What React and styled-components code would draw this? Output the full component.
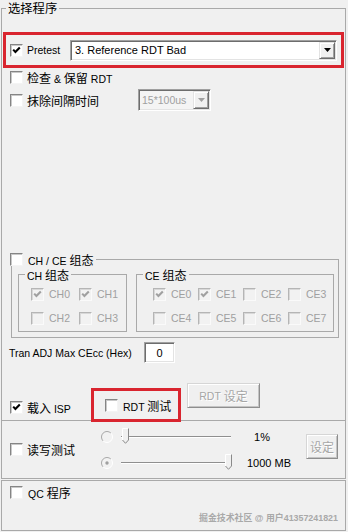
import React from "react";
import styled, { createGlobalStyle } from "styled-components";

const LINE = "#a9a9a9";
const RED = "#d9252f";
const GRAY = "#a0a0a0";

const GlobalStyle = createGlobalStyle`
  html, body { margin: 0; padding: 0; background: #f0f0f0; }
  body {
    font-family: "Liberation Sans", "Noto Sans CJK SC", sans-serif;
    font-size: 10.5px;
    color: #000;
  }
`;

const Page = styled.div`
  width: 348px;
  height: 532px;
  box-sizing: border-box;
  padding-left: 1px;
  overflow: hidden;
`;

const Zh = styled.span`
  font-family: "Noto Sans CJK SC", sans-serif;
  font-size: 12px;
`;

/* ---------- group boxes ---------- */
const MainGroup = styled.fieldset`
  margin: 0;
  padding: 0;
  min-width: 0;
  width: 345px;
  box-sizing: border-box;
  border: 1px solid ${LINE};
`;

const MainLegend = styled.legend`
  margin-left: 4px;
  padding: 0 2px;
  height: 17px;
  display: flex;
  align-items: center;
  font-family: "Noto Sans CJK SC", sans-serif;
  font-size: 12.3px;
  line-height: 17px;
`;

const Body = styled.div`
  display: flex;
  flex-direction: column;
  align-items: flex-start;
`;

const CheckGroup = styled.fieldset`
  margin: 0 0 0 9px;
  padding: 0;
  min-width: 0;
  width: 328px;
  box-sizing: border-box;
  border: 1px solid ${LINE};
`;

const CheckLegend = styled.legend`
  margin-left: -2px;
  padding: 0 3px 0 0;
  height: 14px;
  display: flex;
  align-items: center;
`;

const SubRow = styled.div`
  display: flex;
  gap: 9px;
  padding: 1px 4px 5px 6px;
`;

const SubGroup = styled.fieldset`
  margin: 0;
  padding: 0;
  min-width: 0;
  width: ${(p) => p.$w}px;
  box-sizing: border-box;
  border: 1px solid ${LINE};
`;

const SubLegend = styled.legend`
  margin-left: 6px;
  padding: 0 2px;
  height: 14px;
  display: flex;
  align-items: center;
  white-space: nowrap;
`;

const Grid = styled.div`
  display: grid;
  grid-template-columns: repeat(${(p) => p.$cols}, ${(p) => p.$cw}px);
  grid-auto-rows: 24px;
  align-items: center;
  padding: 1px 0 1px ${(p) => p.$pl}px;
`;

/* ---------- check box ---------- */
const Box = styled.span`
  flex: none;
  width: 13px;
  height: 13px;
  box-sizing: border-box;
  border: 1px solid;
  border-color: ${(p) =>
    p.$disabled ? "#b5b5b5 #fafafa #fafafa #b5b5b5" : "#858585 #f4f4f4 #f4f4f4 #858585"};
  box-shadow: inset 1px 1px ${(p) => (p.$disabled ? "#d8d8d8" : "#c9c9c9")};
  background: ${(p) => (p.$disabled ? "#f2f2f2" : "#fff")};
  display: flex;
  align-items: center;
  justify-content: center;
`;

const CheckLabel = styled.label`
  display: flex;
  align-items: center;
  gap: ${(p) => p.$gap ?? 4}px;
  width: ${(p) => (p.$w ? `${p.$w}px` : "auto")};
  flex: none;
  color: ${(p) => (p.$disabled ? GRAY : "#000")};
  margin-top: ${(p) => p.$mt || 0}px;
  white-space: nowrap;
`;

const Check = ({ checked, disabled, gap, w, mt, children }) => (
  <CheckLabel $gap={gap} $w={w} $mt={mt} $disabled={disabled}>
    <Box $disabled={disabled}>
      {checked && (
        <svg width="9" height="9" viewBox="0 0 9 9">
          <polyline
            points="1.2,3.6 3.4,6 7.8,1.4"
            fill="none"
            stroke={disabled ? GRAY : "#000"}
            strokeWidth="2.1"
          />
        </svg>
      )}
    </Box>
    <span>{children}</span>
  </CheckLabel>
);

/* ---------- red annotation frames ---------- */
const RedFrame = styled.div`
  flex: none;
  box-sizing: border-box;
  border: 3px solid ${RED};
  width: ${(p) => p.$w}px;
  height: ${(p) => p.$h}px;
  margin: ${(p) => p.$m};
  padding-left: ${(p) => p.$pl}px;
  display: flex;
  align-items: center;
`;

/* ---------- combo / input ---------- */
const Combo = styled.div`
  flex: none;
  box-sizing: border-box;
  width: ${(p) => p.$w}px;
  height: ${(p) => p.$h}px;
  border: 1px solid;
  border-color: #a0a0a0 #fff #fff #a0a0a0;
  box-shadow: inset 1px 1px #6d6d6d, inset -1px -1px #e3e3e3;
  background: ${(p) => (p.$disabled ? "#f4f4f4" : "#fff")};
  color: ${(p) => (p.$disabled ? GRAY : "#000")};
  display: flex;
  align-items: center;
  padding-left: ${(p) => p.$pl}px;
  font-size: ${(p) => (p.$disabled ? "10.5px" : "11px")};
`;

const DropBtn = styled.span`
  margin-left: auto;
  margin-right: 1px;
  width: 16px;
  height: ${(p) => p.$h}px;
  box-sizing: border-box;
  border: 1px solid;
  border-color: #e3e3e3 #6d6d6d #6d6d6d #e3e3e3;
  box-shadow: inset 1px 1px #fff, inset -1px -1px #a0a0a0;
  background: #f0f0f0;
  display: flex;
  align-items: center;
  justify-content: center;
`;

const Arrow = ({ color }) => (
  <svg width="7" height="4" viewBox="0 0 7 4">
    <path d="M0 0H7L3.5 4Z" fill={color} />
  </svg>
);

const TextInput = styled.div`
  flex: none;
  box-sizing: border-box;
  width: 31px;
  height: 21px;
  border: 1px solid;
  border-color: #a0a0a0 #fff #fff #a0a0a0;
  box-shadow: inset 1px 1px #6d6d6d, inset -1px -1px #e3e3e3;
  background: #fff;
  display: flex;
  align-items: center;
  justify-content: center;
  font-size: 11px;
`;

/* ---------- rows ---------- */
const OptionRow = styled.div`
  display: flex;
  align-items: center;
  height: ${(p) => p.$h}px;
  margin-top: ${(p) => p.$mt || 0}px;
  padding-left: 8px;
`;

const Spacer = styled.div`
  height: ${(p) => p.$h}px;
`;

const TranRow = styled.div`
  display: flex;
  align-items: center;
  height: 21px;
  margin-top: 4px;
  padding-left: 7px;
`;

const TranLabel = styled.span`
  width: 135px;
  flex: none;
  white-space: nowrap;
`;

const BottomRow = styled.div`
  display: flex;
  align-items: flex-start;
  height: 37px;
  margin-top: 20px;
  padding-left: 8px;
`;

const WinButton = styled.button`
  flex: none;
  box-sizing: border-box;
  width: ${(p) => p.$w}px;
  height: 25px;
  margin: ${(p) => p.$m || 0};
  align-self: flex-start;
  padding: 0;
  font: inherit;
  background: #f0f0f0;
  color: #a6a6a6;
  text-shadow: 1px 1px #fff;
  border: 1px solid;
  border-color: #d6d6d6 #8e8e8e #8e8e8e #d6d6d6;
  box-shadow: inset 1px 1px #fff, inset -1px -1px #c4c4c4;
  display: flex;
  align-items: center;
  justify-content: center;
`;

/* ---------- read/write panel ---------- */
const Panel = styled.div`
  width: 345px;
  height: 58px;
  box-sizing: border-box;
  border: 1px solid ${LINE};
  border-top: none;
  display: flex;
  align-items: center;
  padding-left: 8px;
`;

const SliderGrid = styled.div`
  display: grid;
  grid-template-columns: 12px 119px 74px;
  grid-auto-rows: 26px;
  align-items: center;
`;

const Slider = styled.div`
  position: relative;
  width: 112px;
  height: 26px;
  margin-left: 7px;
  display: flex;
  align-items: center;
`;

const Channel = styled.div`
  width: 110px;
  height: 2px;
  margin-left: 1px;
  box-sizing: border-box;
  border-top: 1px solid #8f8f8f;
  border-bottom: 1px solid #fff;
  background: #c8c8c8;
`;

const ThumbWrap = styled.span`
  position: absolute;
  top: 4px;
  width: 7px;
  height: 16px;
  display: flex;
`;

const Value = styled.span`
  text-align: center;
  padding-right: ${(p) => p.$shift || 0}px;
  font-size: 11px;
  white-space: nowrap;
`;

const Radio = ({ checked }) => (
  <svg width="12" height="12" viewBox="0 0 12 12">
    <circle cx="6" cy="6" r="5.5" fill="#f2f2f2" />
    <path d="M9.9 2.1 A5.5 5.5 0 0 0 2.1 9.9" fill="none" stroke="#a8a8a8" />
    <path d="M2.1 9.9 A5.5 5.5 0 0 0 9.9 2.1" fill="none" stroke="#ffffff" />
    {checked && <circle cx="6" cy="6" r="1.7" fill="#a0a0a0" />}
  </svg>
);

const SliderControl = ({ value }) => (
  <Slider>
    <Channel />
    <ThumbWrap style={{ left: `${2 + value * 103}px` }}>
      <svg width="7" height="16" viewBox="0 0 7 16">
        <path d="M0.5 0.5H6.5V12L3.5 15.3L0.5 12Z" fill="#f0f0f0" />
        <polyline points="0.5,12 0.5,0.5 6.5,0.5" fill="none" stroke="#fff" />
        <polyline points="6.5,0.5 6.5,12 3.5,15.3 0.5,12" fill="none" stroke="#8a8a8a" />
      </svg>
    </ThumbWrap>
  </Slider>
);

/* ---------- QC panel ---------- */
const QcPanel = styled.div`
  width: 345px;
  height: 51px;
  margin-top: 1px;
  box-sizing: border-box;
  border: 1px solid ${LINE};
  padding: 3px 7px 0 8px;
  display: flex;
  flex-direction: column;
`;

const QcRow = styled.div`
  height: 17px;
  display: flex;
  align-items: center;
`;

const Watermark = styled.div`
  margin-top: 10px;
  height: 14px;
  line-height: 14px;
  text-align: right;
  color: #a9a9a9;
  font-size: 8.9px;
  font-weight: bold;
  white-space: nowrap;
`;

export default function App() {
  return (
    <Page>
      <GlobalStyle />
      <MainGroup>
        <MainLegend>选择程序</MainLegend>
        <Body>
          <RedFrame $w={341} $h={36} $m="15px 0 0 1px" $pl={4}>
            <Check checked w={60}>
              Pretest
            </Check>
            <Combo $w={267} $h={21} $pl={4}>
              3. Reference RDT Bad
              <DropBtn $h={17}>
                <Arrow color="#000" />
              </DropBtn>
            </Combo>
          </RedFrame>

          <OptionRow $h={18}>
            <Check>
              <Zh>检查</Zh> &amp; <Zh>保留</Zh> RDT
            </Check>
          </OptionRow>

          <OptionRow $h={22} $mt={3}>
            <Check w={128}>
              <Zh>抹除间隔时间</Zh>
            </Check>
            <Combo $w={73} $h={22} $pl={3} $disabled>
              15*100us
              <DropBtn $h={18}>
                <Arrow color="#a0a0a0" />
              </DropBtn>
            </Combo>
          </OptionRow>

          <Spacer $h={141} />

          <CheckGroup>
            <CheckLegend>
              <Check gap={5}>
                CH / CE <Zh>组态</Zh>
              </Check>
            </CheckLegend>
            <SubRow>
              <SubGroup $w={109}>
                <SubLegend>
                  <span>
                    CH <Zh>组态</Zh>
                  </span>
                </SubLegend>
                <Grid $cols={2} $cw={48} $pl={12}>
                  <Check checked disabled gap={5}>CH0</Check>
                  <Check checked disabled gap={5}>CH1</Check>
                  <Check disabled gap={5}>CH2</Check>
                  <Check disabled gap={5}>CH3</Check>
                </Grid>
              </SubGroup>
              <SubGroup $w={198}>
                <SubLegend>
                  <span>
                    CE <Zh>组态</Zh>
                  </span>
                </SubLegend>
                <Grid $cols={4} $cw={45} $pl={16}>
                  <Check checked disabled gap={5}>CE0</Check>
                  <Check checked disabled gap={5}>CE1</Check>
                  <Check disabled gap={5}>CE2</Check>
                  <Check disabled gap={5}>CE3</Check>
                  <Check disabled gap={5}>CE4</Check>
                  <Check disabled gap={5}>CE5</Check>
                  <Check disabled gap={5}>CE6</Check>
                  <Check disabled gap={5}>CE7</Check>
                </Grid>
              </SubGroup>
            </SubRow>
          </CheckGroup>

          <TranRow>
            <TranLabel>Tran ADJ Max CEcc (Hex)</TranLabel>
            <TextInput>0</TextInput>
          </TranRow>

          <BottomRow>
            <Check checked w={81} mt={16}>
              <Zh>载入</Zh> ISP
            </Check>
            <RedFrame $w={90} $h={34} $m="5px 0 0 0" $pl={11}>
              <Check gap={5}>
                RDT <Zh>测试</Zh>
              </Check>
            </RedFrame>
            <WinButton $w={73} $m="0 0 0 6px">
              RDT&nbsp;<Zh>设定</Zh>
            </WinButton>
          </BottomRow>
        </Body>
      </MainGroup>

      <Panel>
        <Check w={91}>
          <Zh>读写测试</Zh>
        </Check>
        <SliderGrid>
          <Radio />
          <SliderControl value={0} />
          <Value $shift={14}>1%</Value>
          <Radio checked />
          <SliderControl value={1} />
          <Value>1000 MB</Value>
        </SliderGrid>
        <WinButton $w={32} $m="13px 0 0 0">
          <Zh>设定</Zh>
        </WinButton>
      </Panel>

      <QcPanel>
        <QcRow>
          <Check gap={5}>
            QC <Zh>程序</Zh>
          </Check>
        </QcRow>
        <Watermark>掘金技术社区 @ 用户41357241821</Watermark>
      </QcPanel>
    </Page>
  );
}
